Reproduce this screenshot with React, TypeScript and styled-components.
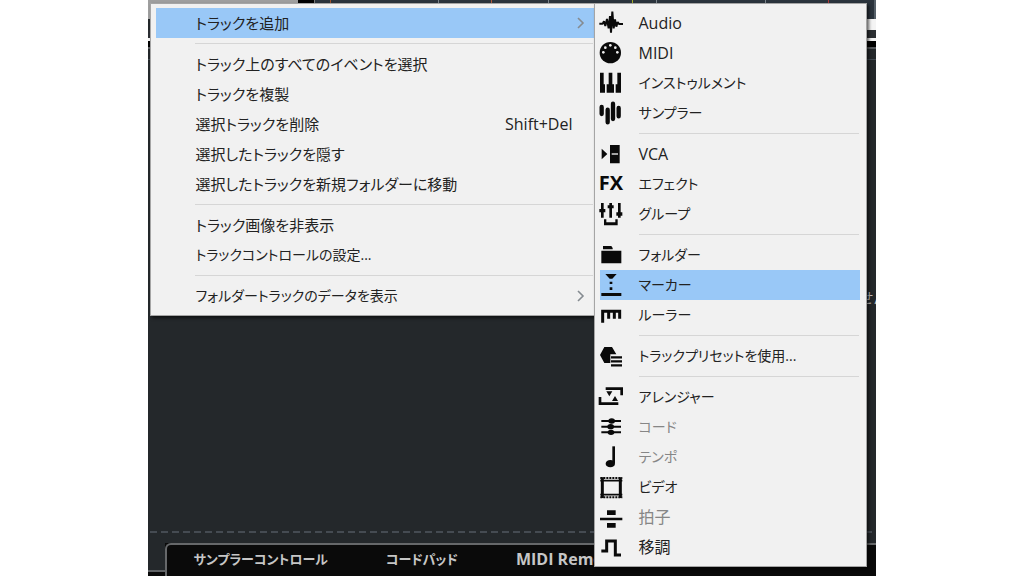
import React from "react";
import styled, { createGlobalStyle } from "styled-components";

const GlobalStyle = createGlobalStyle`
  * { box-sizing: border-box; }
  body {
    margin: 0;
    background: #fff;
    font-family: "Open Sans", "Noto Sans CJK JP", sans-serif;
  }
`;

const Workspace = styled.div`
  position: relative;
  display: flex;
  flex-direction: column;
  width: 71%;
  min-height: 100vh;
  margin: 0 auto;
  background: #24282b;
  overflow: hidden;
`;

const Ruler = styled.div`
  display: flex;
  height: 19px;
  background: #2b343d;
`;

const RulerHead = styled.div`
  width: 150px;
  background: #9f9f9f;
`;

const RulerGap = styled.div`
  width: 17px;
  background: #000;
  border-right: 1px solid #777;
`;

const Ticks = styled.div`
  display: flex;
  flex: 1;
  border-right: 2px solid #566069;
`;

const Tick = styled.span<{ $space: number; $color: string }>`
  width: ${(p) => p.$space}px;
  border-right: 1px solid ${(p) => p.$color};
`;

const Band = styled.div<{ $height: number; $color: string; $inset?: number }>`
  height: ${(p) => p.$height}px;
  margin-left: ${(p) => p.$inset ?? 0}px;
  background: ${(p) => p.$color};
`;

const Canvas = styled.main`
  display: flex;
  flex: 1;
  flex-direction: column;
  justify-content: space-between;
  padding-top: 228px;
`;

const Hint = styled.p`
  margin: 0 -12px 0 0;
  text-align: right;
  font-size: 14px;
  line-height: 20px;
  color: #c4c4c4;
  white-space: nowrap;
`;

const DashedLine = styled.div`
  height: 2px;
  margin: 0 2px 10px;
  background: repeating-linear-gradient(90deg, #454b52 0 7px, transparent 7px 11px);
`;

const BottomBar = styled.footer`
  display: flex;
  height: 33px;
  background: #0a0a0a;
`;

const Step = styled.div`
  width: 17px;
  height: 29px;
  background: #24282b;
  border-bottom: 2px solid #5f6265;
`;

const Tabs = styled.nav`
  display: flex;
  flex: 1;
  gap: 58px;
  padding-left: 26px;
  background: #0a0a0a;
  border-top: 2px solid #66686a;
  border-left: 2px solid #66686a;
  border-top-left-radius: 6px;
  overflow: hidden;
`;

const Tab = styled.button<{ $latin?: boolean }>`
  flex: none;
  height: 28px;
  padding: 0;
  border: 0;
  background: none;
  font-family: inherit;
  font-size: ${(p) => (p.$latin ? 16 : 13)}px;
  line-height: 28px;
  font-weight: ${(p) => (p.$latin ? 700 : 600)};
  font-feature-settings: "palt";
  color: #c6c6c6;
`;

const MenuLayer = styled.div`
  position: absolute;
  top: 3px;
  left: 2px;
  right: 9px;
  display: grid;
  grid-template-columns: minmax(0, 443fr) minmax(0, 273fr);
  align-items: start;
`;

const Menu = styled.div<{ $sub?: boolean }>`
  padding: ${(p) => (p.$sub ? "4px 6px 4px 5px" : "4px 0 4px 5px")};
  background: #f1f1f1;
  border: 1px solid #a5a5a5;
  border-right-width: ${(p) => (p.$sub ? 1 : 0)}px;
  box-shadow: 2px 2px 3px rgba(0, 0, 0, 0.6);
`;

const Item = styled.button<{ $active?: boolean; $size: number }>`
  display: flex;
  align-items: center;
  width: 100%;
  height: 30px;
  padding: 0;
  border: 0;
  background: ${(p) => (p.$active ? "#99c8f7" : "transparent")};
  color: #222;
  font-family: inherit;
  font-size: ${(p) => p.$size}px;
  line-height: 30px;
  font-feature-settings: "palt";
  text-align: left;
  white-space: nowrap;
  &:disabled { color: #868686; }
`;

const IconCell = styled.span`
  display: flex;
  flex: none;
  justify-content: center;
  width: 39px;
  height: 30px;
  padding: 2px 16px 4px 0;
`;

const Drawing = styled.svg`
  flex: none;
  width: 24px;
  height: 24px;
  overflow: visible;
  color: #0a0a0a;
`;

const FxMark = styled.span`
  color: #0a0a0a;
  font-size: 20px;
  line-height: 24px;
  font-weight: 700;
`;

const Label = styled.span`
  flex: 1;
`;

const Shortcut = styled.kbd`
  margin-right: 21px;
  font-family: inherit;
  font-size: 16px;
`;

const Arrow = styled.svg`
  width: 8px;
  height: 12px;
  margin-right: 9px;
`;

const Separator = styled.hr`
  height: 1px;
  margin: 5px 1px 5px 39px;
  border: 0;
  background: #d6d6d6;
`;

const icons: Record<string, React.ReactNode> = {
  audio: (
    <path
      d="M1 41H11L15 34L19 48L24 27L29 55L33 18L36 68L40 5L44 55L48 28L52 50L56 36L60 42H72"
      fill="none" stroke="currentColor" strokeWidth="6" strokeLinejoin="bevel"
    />
  ),
  midi: (
    <>
      <circle cx="34" cy="38" r="32" fill="currentColor" />
      <g fill="#f1f1f1">
        <circle cx="13" cy="37" r="4" /><circle cx="19" cy="23" r="4" />
        <circle cx="34" cy="16" r="4" /><circle cx="49" cy="23" r="4" />
        <circle cx="55" cy="37" r="4" />
      </g>
    </>
  ),
  piano: (
    <path
      d="M3 8H14V43H18V68H3ZM29 8H40V43H45V68H23V43H29ZM55 8H66V68H50V43H55Z"
      fill="currentColor"
    />
  ),
  sampler: (
    <path
      d="M8 21V42M26 29V67M42 11V57M59 24V49"
      stroke="currentColor" strokeWidth="13" strokeLinecap="round"
    />
  ),
  vca: (
    <>
      <path d="M8 23L25 39L8 55ZM33 12H62V67H33Z" fill="currentColor" />
      <path d="M38 39H57" stroke="#f1f1f1" strokeWidth="4" />
    </>
  ),
  group: (
    <>
      <path d="M10 6V50M35 6V50M61 6V50" stroke="currentColor" strokeWidth="8" />
      <path
        d="M1 24H19V34H1ZM26 13H44V22H26ZM52 34H70V44H52ZM15 55H22V64H49V55H56V73H15Z"
        fill="currentColor"
      />
    </>
  ),
  folder: (
    <path d="M12 12H37L41 18V22H12ZM7 26H67V64H7Z" fill="currentColor" />
  ),
  marker: (
    <path
      d="M19 6H53L40 20H32ZM32 29H40V36H32ZM32 46H40V54H32ZM7 63H67V72H7Z"
      fill="currentColor"
    />
  ),
  ruler: (
    <path
      d="M11 62V28H62V50M29 28V50M46 28V50"
      fill="none" stroke="currentColor" strokeWidth="9"
    />
  ),
  preset: (
    <>
      <path d="M16 12H39L52 34H34V60H16L3 36Z" fill="currentColor" />
      <path d="M36 43H69M36 55H69M36 67H69" stroke="currentColor" strokeWidth="7" />
    </>
  ),
  arranger: (
    <>
      <path d="M20 14H68V34M3 39V59H58" fill="none" stroke="currentColor" strokeWidth="8" />
      <path d="M22 22H40L31 37ZM48 36L57 51H39Z" fill="currentColor" />
    </>
  ),
  chord: (
    <>
      <path d="M7 21H66M7 38H66M7 55H66" stroke="currentColor" strokeWidth="6" />
      <g fill="currentColor">
        <ellipse cx="38" cy="21" rx="10" ry="8" />
        <ellipse cx="35" cy="38" rx="10" ry="8" />
        <ellipse cx="36" cy="55" rx="10" ry="8" />
      </g>
    </>
  ),
  tempo: (
    <>
      <path d="M44 7V58" stroke="currentColor" strokeWidth="8" />
      <ellipse cx="34" cy="59" rx="14" ry="11" fill="currentColor" />
    </>
  ),
  video: (
    <>
      <path d="M10 10V72M64 10V72" stroke="currentColor" strokeWidth="9" />
      <path d="M4 20H70M4 62H70" stroke="currentColor" strokeWidth="5" />
      <path d="M4 12H70M4 70H70" stroke="currentColor" strokeWidth="6" strokeDasharray="6 3" />
    </>
  ),
  signature: (
    <path d="M24 19H50V33H24ZM3 41H70V49H3ZM24 57H50V71H24Z" fill="currentColor" />
  ),
  transpose: (
    <path
      d="M7 51H23V21H49V63H66"
      fill="none" stroke="currentColor" strokeWidth="9"
    />
  ),
};

type Entry = {
  label: string;
  icon?: string;
  shortcut?: string;
  active?: boolean;
  submenu?: boolean;
  disabled?: boolean;
  size?: number;
};

const trackMenu: Entry[][] = [
  [{ label: "トラックを追加", active: true, submenu: true, size: 15 }],
  [
    { label: "トラック上のすべてのイベントを選択", size: 15 },
    { label: "トラックを複製", size: 15 },
    { label: "選択トラックを削除", shortcut: "Shift+Del", size: 15 },
    { label: "選択したトラックを隠す", size: 15 },
    { label: "選択したトラックを新規フォルダーに移動", size: 15 },
  ],
  [
    { label: "トラック画像を非表示", size: 15 },
    { label: "トラックコントロールの設定..." },
  ],
  [{ label: "フォルダートラックのデータを表示", submenu: true }],
];

const addMenu: Entry[][] = [
  [
    { label: "Audio", icon: "audio", size: 16 },
    { label: "MIDI", icon: "midi", size: 16 },
    { label: "インストゥルメント", icon: "piano" },
    { label: "サンプラー", icon: "sampler" },
  ],
  [
    { label: "VCA", icon: "vca", size: 16 },
    { label: "エフェクト", icon: "fx" },
    { label: "グループ", icon: "group" },
  ],
  [
    { label: "フォルダー", icon: "folder" },
    { label: "マーカー", icon: "marker", active: true },
    { label: "ルーラー", icon: "ruler" },
  ],
  [{ label: "トラックプリセットを使用...", icon: "preset" }],
  [
    { label: "アレンジャー", icon: "arranger" },
    { label: "コード", icon: "chord", disabled: true },
    { label: "テンポ", icon: "tempo", disabled: true },
    { label: "ビデオ", icon: "video" },
    { label: "拍子", icon: "signature", disabled: true, size: 16 },
    { label: "移調", icon: "transpose", size: 16 },
  ],
];

const ticks: [number, string][] = [
  [16, "#a0522d"], [108, "#7c858c"], [53, "#b0583a"], [57, "#7c858c"],
  [84, "#a3ad2c"], [24, "#7c858c"], [109, "#7c858c"], [63, "#b03a3a"],
];

function MenuIcon({ name }: { name?: string }) {
  return (
    <IconCell aria-hidden="true">
      {name === "fx" && <FxMark>FX</FxMark>}
      {name && name !== "fx" && <Drawing viewBox="0 0 72 72">{icons[name]}</Drawing>}
    </IconCell>
  );
}

function MenuGroups({ groups }: { groups: Entry[][] }) {
  return (
    <>
      {groups.map((group, i) => (
        <React.Fragment key={i}>
          {i > 0 && <Separator />}
          {group.map((e) => (
            <Item
              key={e.label}
              type="button"
              role="menuitem"
              $active={e.active}
              $size={e.size ?? 14}
              disabled={e.disabled}
            >
              <MenuIcon name={e.icon} />
              <Label>{e.label}</Label>
              {e.shortcut && <Shortcut>{e.shortcut}</Shortcut>}
              {e.submenu && (
                <Arrow viewBox="0 0 8 12" aria-hidden="true">
                  <path d="M1 1L6 6L1 11" fill="none" stroke="#858b91" strokeWidth="1.6" />
                </Arrow>
              )}
            </Item>
          ))}
        </React.Fragment>
      ))}
    </>
  );
}

export default function App() {
  return (
    <>
      <GlobalStyle />
      <Workspace>
        <Ruler>
          <RulerHead />
          <RulerGap />
          <Ticks>
            {ticks.map(([space, color], i) => (
              <Tick key={i} $space={space} $color={color} />
            ))}
          </Ticks>
        </Ruler>
        <Band $height={11} $color="#f4f4f4" $inset={20} />
        <Band $height={8} $color="#2c2f33" />
        <Band $height={3} $color="#f4f4f4" />
        <Band $height={6} $color="#000" />
        <Band $height={2} $color="#55585b" />
        <Band $height={10} $color="#24282b" />
        <Band $height={1} $color="#414950" />
        <Canvas>
          <Hint>せん</Hint>
          <DashedLine />
        </Canvas>
        <BottomBar>
          <Step />
          <Tabs>
            <Tab type="button">サンプラーコントロール</Tab>
            <Tab type="button">コードパッド</Tab>
            <Tab type="button" $latin>MIDI Remote</Tab>
          </Tabs>
        </BottomBar>
        <MenuLayer>
          <Menu role="menu">
            <MenuGroups groups={trackMenu} />
          </Menu>
          <Menu role="menu" $sub>
            <MenuGroups groups={addMenu} />
          </Menu>
        </MenuLayer>
      </Workspace>
    </>
  );
}
